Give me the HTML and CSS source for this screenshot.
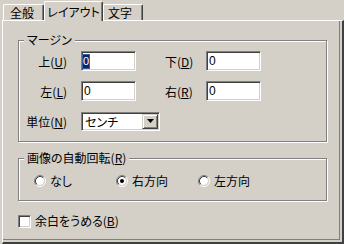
FILE: index.html
```html
<!DOCTYPE html>
<html lang="ja">
<head>
<meta charset="utf-8">
<link rel="stylesheet" href="styles.css">
</head>
<body>
<div class="tabs">
  <div class="tab t1">全般</div>
  <div class="tab t2">レイアウト</div>
  <div class="tab t3">文字</div>
</div>
<div class="panel">
  <div class="group margins">
    <span class="legend">マージン</span>
    <div class="grid">
      <span class="lbl">上(<u>U</u>)</span>
      <div class="edit"><span class="sel">0</span></div>
      <span class="lbl2">下(<u>D</u>)</span>
      <div class="edit">0</div>
      <span class="lbl">左(<u>L</u>)</span>
      <div class="edit">0</div>
      <span class="lbl2">右(<u>R</u>)</span>
      <div class="edit">0</div>
      <span class="lbl">単位(<u>N</u>)</span>
      <div class="combo">
        <span class="combo-text">センチ</span>
        <span class="drop"><svg width="7" height="4" viewBox="0 0 7 4"><polygon points="0,0 7,0 3.5,4" fill="#000"/></svg></span>
      </div>
    </div>
  </div>
  <div class="group rotate">
    <span class="legend">画像の自動回転(<u>R</u>)</span>
    <div class="radios">
      <div class="radio">
        <svg width="12" height="12" viewBox="0 0 12 12"><circle cx="6" cy="6" r="4" fill="#fff"/><path d="M2.11 9.89 A5.5 5.5 0 0 1 9.89 2.11" stroke="#808080" fill="none"/><path d="M9.89 2.11 A5.5 5.5 0 0 1 2.11 9.89" stroke="#fff" fill="none"/><path d="M2.82 9.18 A4.5 4.5 0 0 1 9.18 2.82" stroke="#404040" fill="none"/><path d="M9.18 2.82 A4.5 4.5 0 0 1 2.82 9.18" stroke="#d4d0c8" fill="none"/></svg>
        <span>なし</span>
      </div>
      <div class="radio">
        <svg width="12" height="12" viewBox="0 0 12 12"><circle cx="6" cy="6" r="4" fill="#fff"/><path d="M2.11 9.89 A5.5 5.5 0 0 1 9.89 2.11" stroke="#808080" fill="none"/><path d="M9.89 2.11 A5.5 5.5 0 0 1 2.11 9.89" stroke="#fff" fill="none"/><path d="M2.82 9.18 A4.5 4.5 0 0 1 9.18 2.82" stroke="#404040" fill="none"/><path d="M9.18 2.82 A4.5 4.5 0 0 1 2.82 9.18" stroke="#d4d0c8" fill="none"/><circle cx="6" cy="6" r="2" fill="#000"/></svg>
        <span>右方向</span>
      </div>
      <div class="radio">
        <svg width="12" height="12" viewBox="0 0 12 12"><circle cx="6" cy="6" r="4" fill="#fff"/><path d="M2.11 9.89 A5.5 5.5 0 0 1 9.89 2.11" stroke="#808080" fill="none"/><path d="M9.89 2.11 A5.5 5.5 0 0 1 2.11 9.89" stroke="#fff" fill="none"/><path d="M2.82 9.18 A4.5 4.5 0 0 1 9.18 2.82" stroke="#404040" fill="none"/><path d="M9.18 2.82 A4.5 4.5 0 0 1 2.82 9.18" stroke="#d4d0c8" fill="none"/></svg>
        <span>左方向</span>
      </div>
    </div>
  </div>
  <div class="check">
    <span class="box"></span>
    <span>余白をうめる(<u>B</u>)</span>
  </div>
</div>
</body>
</html>
```
FILE: styles.css
```css
html, body {
  margin: 0;
  padding: 0;
}
body {
  width: 344px;
  height: 244px;
  overflow: hidden;
  background: #d4d0c8;
  font-family: "Noto Sans CJK JP", "Noto Sans", sans-serif;
  font-size: 12px;
  color: #000;
  font-feature-settings: "palt";
}
u {
  text-decoration: underline;
  text-underline-offset: 1px;
}

/* Tabs */
.tabs {
  display: flex;
  align-items: flex-end;
  height: 20px;
  padding-left: 3px;
}
.tab {
  box-sizing: border-box;
  height: 16px;
  border-left: 1px solid #fff;
  border-top: 1px solid #fff;
  border-right: 1px solid #404040;
  box-shadow: inset -1px 0 0 #808080;
  border-top-left-radius: 2px;
  border-top-right-radius: 2px;
  line-height: 13px;
  padding-top: 1px;
  white-space: nowrap;
}
.t1 {
  width: 41px;
  padding-left: 6px;
}
.t2 {
  width: 59px;
  height: 20px;
  margin-bottom: -1px;
  position: relative;
  z-index: 1;
  background: #d4d0c8;
  text-align: center;
  padding-top: 3px;
  line-height: 14px;
}
.t3 {
  width: 40px;
  padding-left: 4px;
}

/* Panel */
.panel {
  box-sizing: border-box;
  margin-left: 2px;
  height: 224px;
  border-left: 1px solid #fff;
  border-top: 1px solid #fff;
  border-right: 2px solid #404040;
  border-bottom: 2px solid #404040;
  box-shadow: inset -2px -2px 0 #d4d0c8, inset -3px -3px 0 #808080;
  padding: 19px 0 0 15px;
}

/* Group boxes */
.group {
  position: relative;
  box-sizing: border-box;
  width: 309px;
  border: 1px solid #808080;
  box-shadow: inset 1px 1px 0 #fff, 1px 1px 0 #fff;
}
.legend {
  position: absolute;
  top: -8px;
  left: 5px;
  padding: 0 3px;
  background: #d4d0c8;
  line-height: 14px;
  white-space: nowrap;
}
.margins {
  height: 102px;
  padding-top: 10px;
}
.grid {
  display: grid;
  grid-template-columns: 62px 55px 70px 55px;
  grid-auto-rows: 20px;
  row-gap: 10px;
  align-items: center;
}
.lbl {
  text-align: right;
  padding-right: 14px;
  white-space: nowrap;
}
.lbl2 {
  padding-left: 29px;
  white-space: nowrap;
}
.edit {
  box-sizing: border-box;
  height: 20px;
  width: 55px;
  background: #fff;
  border: 1px solid;
  border-color: #808080 #fff #fff #808080;
  box-shadow: inset 1px 1px 0 #404040, inset -1px -1px 0 #d4d0c8;
  padding: 1px 2px 1px 2px;
  line-height: 16px;
  font-family: "Liberation Sans", sans-serif;
}
.sel {
  display: inline-block;
  width: 6px;
  margin-left: -1px;
  background: #0a246a;
  color: #fff;
  font-size: 11px;
  text-align: center;
  line-height: 13px;
  vertical-align: middle;
  outline: 1px solid #3a5a9a;
}
.combo {
  box-sizing: border-box;
  height: 19px;
  width: 79px;
  display: flex;
  background: #fff;
  border: 1px solid;
  border-color: #808080 #fff #fff #808080;
  box-shadow: inset 1px 1px 0 #404040, inset -1px -1px 0 #d4d0c8;
  padding: 1px;
}
.combo-text {
  flex: 1;
  padding-left: 2px;
  line-height: 15px;
}
.drop {
  box-sizing: border-box;
  width: 16px;
  display: flex;
  align-items: center;
  justify-content: center;
  background: #d4d0c8;
  border: 1px solid;
  border-color: #d4d0c8 #404040 #404040 #d4d0c8;
  box-shadow: inset 1px 1px 0 #fff, inset -1px -1px 0 #808080;
}
.drop svg {
  display: block;
}

/* Rotation group */
.rotate {
  height: 43px;
  margin-top: 16px;
  padding: 2px 0 0 15px;
  display: flex;
  align-items: center;
}
.radios {
  display: flex;
}
.radio {
  width: 82px;
  display: flex;
  align-items: center;
  gap: 4px;
  line-height: 14px;
}
.radio svg {
  display: block;
  flex: none;
}

/* Checkbox */
.check {
  margin-top: 13px;
  display: flex;
  align-items: center;
  gap: 4px;
  line-height: 14px;
}
.box {
  box-sizing: border-box;
  width: 13px;
  height: 13px;
  background: #fff;
  border: 1px solid;
  border-color: #808080 #fff #fff #808080;
  box-shadow: inset 1px 1px 0 #404040, inset -1px -1px 0 #d4d0c8;
}
```
